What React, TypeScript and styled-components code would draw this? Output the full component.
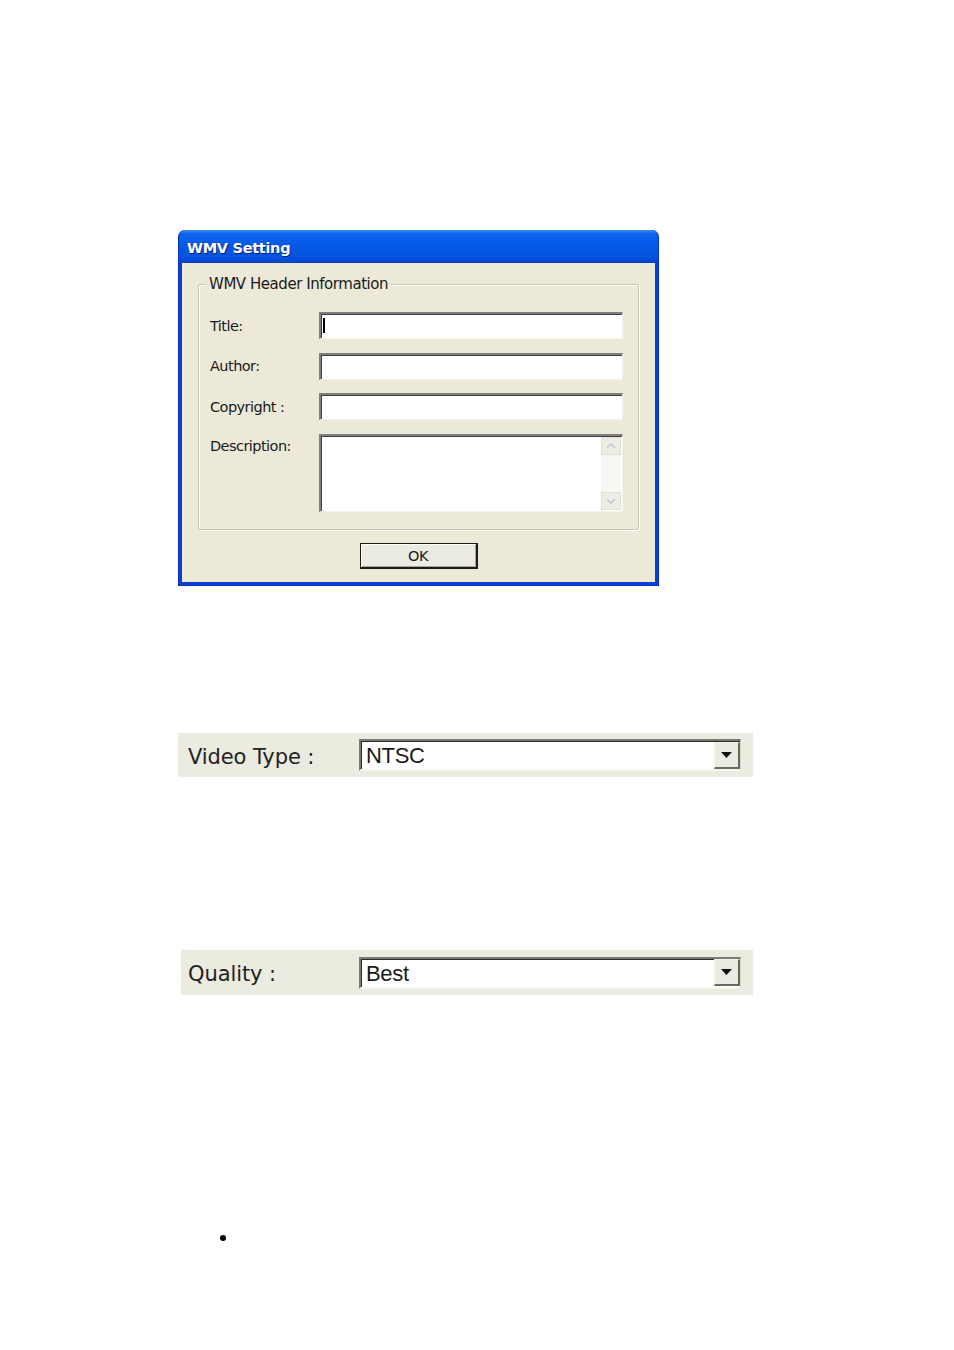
import React from "react";
import styled, { createGlobalStyle } from "styled-components";

const Global = createGlobalStyle`
  html, body { margin: 0; padding: 0; background: #ffffff; }
  body { font-family: Tahoma, "DejaVu Sans", "Liberation Sans", sans-serif; }
`;

const Page = styled.div`
  width: 954px;
  height: 1350px;
  display: flex;
  flex-direction: column;
  align-items: flex-start;
  padding-top: 230px;
  box-sizing: border-box;
`;

const Dialog = styled.div`
  margin-left: 178px;
  width: 481px;
  height: 356px;
  box-sizing: border-box;
  display: flex;
  flex-direction: column;
  background: #0b3fd6;
  border-radius: 7px 7px 0 0;
  padding: 0 3px 3px 3px;
  border: 1px solid #0a2fb8;
  border-top: none;
`;

const TitleBar = styled.div`
  height: 34px;
  margin: 0 -3px;
  border-radius: 7px 7px 0 0;
  background: linear-gradient(
    to bottom,
    #3d8df5 0%,
    #0b63ec 12%,
    #0558e6 50%,
    #0452dc 85%,
    #0541c4 100%
  );
  display: flex;
  align-items: center;
  padding-left: 8px;
  padding-top: 2px;
  box-sizing: border-box;
  color: #ffffff;
  font-family: "DejaVu Sans", "Liberation Sans", sans-serif;
  font-weight: bold;
  font-size: 14.5px;
  letter-spacing: -0.3px;
  text-shadow: 1px 1px 0 #0a1e7a;
`;

const Body = styled.div`
  flex: 1;
  background: #ece9d8;
  display: flex;
  flex-direction: column;
  align-items: center;
  padding: 21px 16px 13px 16px;
  box-sizing: border-box;
`;

const Group = styled.div`
  align-self: stretch;
  height: 246px;
  box-sizing: border-box;
  border: 1px solid #c8c4b4;
  border-radius: 2px;
  box-shadow: inset 1px 1px 0 #ffffff, 1px 1px 0 #ffffff;
  padding: 27px 15px 0 11px;
  display: flex;
  flex-direction: column;
  gap: 13.5px;
  position: relative;
`;

const Legend = styled.div`
  position: absolute;
  top: -10px;
  left: 7px;
  padding: 0 3px 0 3px;
  background: #ece9d8;
  font-family: "DejaVu Sans", "Liberation Sans", sans-serif;
  font-size: 15px;
  letter-spacing: -0.45px;
  color: #1a1a1a;
  line-height: 18px;
`;

const Row = styled.div<{ $top?: boolean }>`
  display: flex;
  align-items: ${(p) => (p.$top ? "flex-start" : "center")};
`;

const Label = styled.div<{ $pad?: number }>`
  width: 109px;
  flex: none;
  font-family: "DejaVu Sans", "Liberation Sans", sans-serif;
  font-size: 14.5px;
  letter-spacing: -0.55px;
  color: #1a1a1a;
  padding-top: ${(p) => p.$pad ?? 0}px;
`;

const Field = styled.div<{ $h: number }>`
  flex: 1;
  height: ${(p) => p.$h}px;
  box-sizing: border-box;
  background: #ffffff;
  border-top: 2px solid #7f7f7f;
  border-left: 2px solid #7f7f7f;
  border-right: 1px solid #f4f3ee;
  border-bottom: 1px solid #f4f3ee;
  box-shadow: inset 1px 1px 0 #404040;
  position: relative;
  display: flex;
`;

const Caret = styled.div`
  width: 2px;
  height: 15px;
  background: #000;
  margin: 4px 0 0 2px;
`;

const ScrollBar = styled.div`
  margin-left: auto;
  width: 20px;
  margin-right: 1px;
  margin-top: 1px;
  margin-bottom: 1px;
  background: #f7f7f3;
  display: flex;
  flex-direction: column;
  justify-content: space-between;
`;

const ScrollBtn = styled.div`
  height: 18px;
  background: #eeede5;
  border: 1px solid #e2e0d4;
  box-sizing: border-box;
  display: flex;
  align-items: center;
  justify-content: center;
`;

const Buttons = styled.div`
  margin-top: 13px;
  display: flex;
  justify-content: center;
`;

const OkButton = styled.div`
  width: 118px;
  height: 26px;
  box-sizing: border-box;
  border: 1px solid #1c1c1c;
  border-right-width: 2px;
  border-bottom-width: 2px;
  background: #ecebe2;
  box-shadow: inset 1px 1px 0 #ffffff, inset -1px -1px 0 #a8a69a;
  display: flex;
  align-items: center;
  justify-content: center;
  font-family: "DejaVu Sans", "Liberation Sans", sans-serif;
  font-size: 14.5px;
  letter-spacing: -0.5px;
  color: #1a1a1a;
`;

const Strip = styled.div<{ $left: number; $top: number; $w: number; $h: number }>`
  margin-left: ${(p) => p.$left}px;
  margin-top: ${(p) => p.$top}px;
  width: ${(p) => p.$w}px;
  height: ${(p) => p.$h}px;
  background: #ecebdf;
  display: flex;
  align-items: center;
  box-sizing: border-box;
`;

const StripLabel = styled.div<{ $w: number; $pad: number }>`
  width: ${(p) => p.$w}px;
  padding-left: ${(p) => p.$pad}px;
  padding-top: 3px;
  box-sizing: border-box;
  flex: none;
  font-family: "DejaVu Sans", "Liberation Sans", sans-serif;
  font-size: 21px;
  letter-spacing: -0.1px;
  color: #222;
`;

const Combo = styled.div`
  width: 382px;
  height: 32px;
  box-sizing: border-box;
  background: #ffffff;
  border-top: 2px solid #7a7a72;
  border-left: 2px solid #7a7a72;
  border-right: 1px solid #d8d6c8;
  border-bottom: 2px solid #f6f5ee;
  box-shadow: inset 1px 1px 0 #2c2c2c;
  display: flex;
  align-items: center;
  padding-left: 5px;
  padding-right: 0;
`;

const ComboText = styled.div`
  flex: 1;
  font-family: "Liberation Sans", Arial, sans-serif;
  font-size: 22px;
  color: #1a1a1a;
  letter-spacing: -0.3px;
  padding-top: 2px;
`;

const DropBtn = styled.div`
  width: 26px;
  height: 27px;
  box-sizing: border-box;
  background: #ecebe2;
  border-top: 1px solid #f4f3ec;
  border-left: 1px solid #f4f3ec;
  border-right: 2px solid #6a6a64;
  border-bottom: 2px solid #6a6a64;
  display: flex;
  align-items: center;
  justify-content: center;
`;

const Bullet = styled.div`
  margin-left: 220px;
  margin-top: 240px;
  width: 6px;
  height: 6px;
  border-radius: 50%;
  background: #000;
`;

const Chevron = ({ up }: { up?: boolean }) => (
  <svg width="10" height="6" viewBox="0 0 10 6">
    <path
      d={up ? "M1 5 L5 1 L9 5" : "M1 1 L5 5 L9 1"}
      fill="none"
      stroke="#c3c7cf"
      strokeWidth="1.6"
    />
  </svg>
);

const Triangle = () => (
  <svg width="11" height="6" viewBox="0 0 11 6">
    <path d="M0 0 H11 L5.5 6 Z" fill="#111" />
  </svg>
);

export default function App() {
  return (
    <>
      <Global />
      <Page>
        <Dialog>
          <TitleBar>WMV Setting</TitleBar>
          <Body>
            <Group>
              <Legend>WMV Header Information</Legend>
              <Row>
                <Label>Title:</Label>
                <Field $h={27}>
                  <Caret />
                </Field>
              </Row>
              <Row>
                <Label>Author:</Label>
                <Field $h={27} />
              </Row>
              <Row>
                <Label>Copyright :</Label>
                <Field $h={27} />
              </Row>
              <Row $top>
                <Label $pad={4}>Description:</Label>
                <Field $h={78}>
                  <ScrollBar>
                    <ScrollBtn>
                      <Chevron up />
                    </ScrollBtn>
                    <ScrollBtn>
                      <Chevron />
                    </ScrollBtn>
                  </ScrollBar>
                </Field>
              </Row>
            </Group>
            <Buttons>
              <OkButton>OK</OkButton>
            </Buttons>
          </Body>
        </Dialog>

        <Strip $left={178} $top={147} $w={575} $h={44}>
          <StripLabel $w={181} $pad={10}>Video Type :</StripLabel>
          <Combo>
            <ComboText>NTSC</ComboText>
            <DropBtn>
              <Triangle />
            </DropBtn>
          </Combo>
        </Strip>

        <Strip $left={181} $top={173} $w={572} $h={45}>
          <StripLabel $w={178} $pad={7}>Quality :</StripLabel>
          <Combo>
            <ComboText>Best</ComboText>
            <DropBtn>
              <Triangle />
            </DropBtn>
          </Combo>
        </Strip>

        <Bullet />
      </Page>
    </>
  );
}
